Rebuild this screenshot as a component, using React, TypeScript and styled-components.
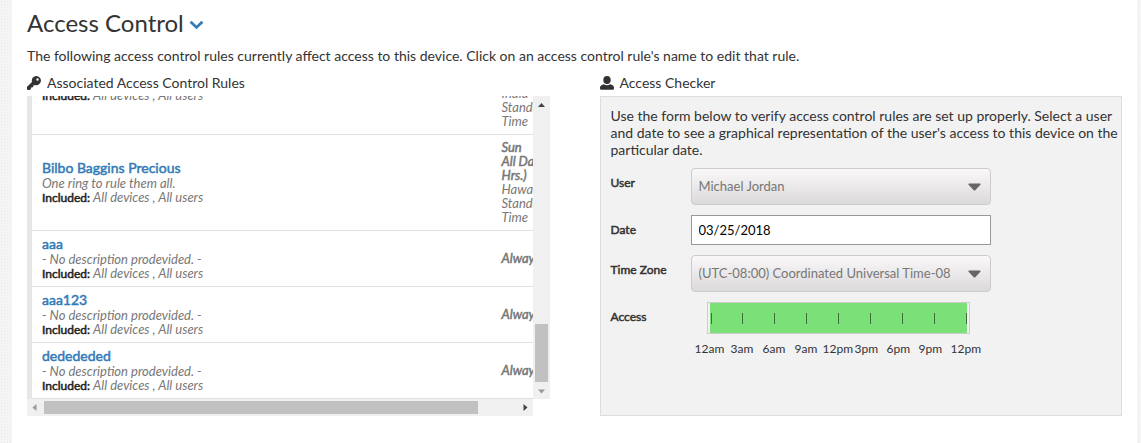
import React from "react";
import styled, { createGlobalStyle, css } from "styled-components";

const GlobalStyle = createGlobalStyle`
  * { box-sizing: border-box; }
  body {
    margin: 0;
    background-color: #f5f5f5;
    background-image: radial-gradient(#e9e9e9 1px, transparent 1px);
    background-size: 3px 3px;
    font-family: Lato, "Liberation Sans", sans-serif;
    font-size: 14px;
    line-height: 17px;
    color: #333;
  }
`;

const Page = styled.main`
  min-height: 100vh;
  margin: 0 4px 0 12px;
  padding: 8px 15px 27px;
  background: #fff;
`;

const Title = styled.h1`
  display: flex;
  align-items: center;
  gap: 5px;
  margin: 0 0 9px;
  font-size: 24px;
  line-height: 30px;
  font-weight: 400;
`;

const Toggle = styled.button`
  display: flex;
  padding: 4px 0 0;
  border: 0;
  background: none;
  color: #337ab7;
`;

const Intro = styled.p`
  margin: 0 0 10px;
`;

const Columns = styled.div`
  display: grid;
  grid-template-columns: 1fr 1fr;
  gap: 50px;
`;

const Column = styled.section`
  min-width: 0;
`;

const SectionTitle = styled.h2`
  display: flex;
  align-items: center;
  gap: 6px;
  margin: 0 0 5px;
  font-size: 14px;
  line-height: 17px;
  font-weight: 400;
`;

const emphasis = css`
  font-weight: 400;
  -webkit-text-stroke: 0.5px currentColor;
`;

const ScrollArea = styled.div`
  display: grid;
  grid-template-columns: minmax(0, 1fr) 17px;
  grid-template-rows: 303px 17px;
`;

const Viewport = styled.div`
  display: flex;
  align-items: flex-end;
  overflow: hidden;
  border-left: 5px solid #e6e6e6;
`;

const RuleTable = styled.table`
  flex: none;
  width: calc(100% + 47px);
  table-layout: fixed;
  border-collapse: separate;
  border-spacing: 0;
  font-size: 12px;
  line-height: 14px;
`;

const Cell = styled.td<{ $top?: boolean }>`
  padding: ${(p) => (p.$top ? "7px" : "5px")} 10px 6px;
  border-bottom: 1px solid #e0e0e0;
  vertical-align: ${(p) => (p.$top ? "top" : "middle")};
`;

const ScheduleCell = styled(Cell)`
  width: 88px;
  padding-top: 5px;
  color: #777;
  font-size: 13px;
  font-style: italic;
`;

const RuleLink = styled.a`
  display: block;
  font-size: 14px;
  line-height: 16px;
  color: #337ab7;
  text-decoration: none;
  ${emphasis}
`;

const Note = styled.div`
  color: #777;
  font-size: 13px;
  font-style: italic;
`;

const Strong = styled.strong`
  ${emphasis}
`;

const Included = styled.div`
  height: 14px;
  ${Strong} { color: #222; }
`;

const Muted = styled.em`
  color: #777;
  font-size: 13px;
`;

const VerticalBar = styled.div`
  display: flex;
  flex-direction: column;
  align-items: center;
  padding: 5px 2px;
  background: #f0f0f0;
`;

const HorizontalBar = styled.div`
  display: flex;
  align-items: center;
  padding: 0 5px;
  background: #f0f0f0;
`;

const Arrow = styled.svg`
  flex: none;
  display: block;
`;

const VerticalThumb = styled.div`
  width: 13px;
  height: 58px;
  margin: auto 0 7px;
  background: #c1c1c1;
`;

const HorizontalTrack = styled.div`
  flex: 1;
  padding: 0 7px;
`;

const HorizontalThumb = styled.div`
  width: 92%;
  height: 13px;
  background: #c1c1c1;
`;

const Checker = styled.div`
  min-height: 320px;
  padding: 10px 0 20px 10px;
  border: 1px solid #ddd;
  background: #f2f2f2;
`;

const Help = styled.p`
  margin: 0 0 10px;
`;

const Form = styled.form`
  display: grid;
  gap: 10px;
`;

const Field = styled.div`
  display: grid;
  grid-template-columns: 80px minmax(0, 300px);
  align-items: start;
`;

const labelStyle = css`
  padding-top: 7px;
  font-size: 12px;
  line-height: 16px;
  ${emphasis}
`;

const Label = styled.label`
  ${labelStyle}
`;

const Caption = styled.span`
  ${labelStyle}
`;

const SelectBox = styled.div`
  position: relative;
`;

const Select = styled.select`
  display: block;
  width: 100%;
  height: 37px;
  padding: 0 36px 0 7px;
  appearance: none;
  border: 1px solid #ccc;
  border-radius: 4px;
  background: linear-gradient(#faf8f8, #dbd9d9);
  color: #777;
  font: inherit;
  font-size: 13px;
`;

const SelectArrow = styled.svg`
  position: absolute;
  right: 10px;
  top: 15px;
  pointer-events: none;
`;

const TextInput = styled.input`
  display: block;
  width: 100%;
  height: 30px;
  padding: 0 7px;
  border: 1px solid #999;
  background: #fff;
  color: #000;
  font: inherit;
  font-size: 13px;
`;

const Timeline = styled.div`
  padding-left: 4px;
`;

const Band = styled.div`
  width: 263px;
  height: 32px;
  margin-left: 12px;
  padding: 0 2px;
  border: 1px solid #ccc;
`;

const BandFill = styled.div`
  display: flex;
  align-items: center;
  justify-content: space-between;
  height: 100%;
  padding: 0 0 0 1px;
  background: #7be077;
`;

const Tick = styled.span`
  width: 1px;
  height: 11px;
  background: #3c703b;
`;

const Hours = styled.div`
  display: grid;
  grid-template-columns: 36px 32px 32px 28px repeat(5, 32px);
  margin-top: 7px;
  font-size: 12px;
  line-height: 16px;
`;

const rules = [
  { name: "Bilbo Baggins Precious", note: "One ring to rule them all.", days: "Sun", hours: "All Day (24 Hrs.)", zone: "Hawaii Standard Time" },
  { name: "aaa", note: "- No description prodevided. -", days: "Always" },
  { name: "aaa123", note: "- No description prodevided. -", days: "Always" },
  { name: "dedededed", note: "- No description prodevided. -", days: "Always" },
];

const hours = ["12am", "3am", "6am", "9am", "12pm", "3pm", "6pm", "9pm", "12pm"];

function KeyIcon() {
  return (
    <svg width="14" height="14" viewBox="0 0 14 14" fill="#333" aria-hidden="true">
      <path
        fillRule="evenodd"
        d="M9.4 0A4.6 4.6 0 0 0 5 5.9L0.3 10.6Q0 10.9 0 11.3V13.2Q0 14 0.8 14H2.7L4 12.8V11.6H5.2L6.4 10.4V9.3H7.5L8 9A4.6 4.6 0 1 0 9.4 0ZM10.5 2.3A1.2 1.2 0 1 1 10.5 4.7A1.2 1.2 0 1 1 10.5 2.3Z"
      />
    </svg>
  );
}

function UserIcon() {
  return (
    <svg width="14" height="14" viewBox="0 0 14 14" fill="#333" aria-hidden="true">
      <ellipse cx="7" cy="4" rx="3.7" ry="4" />
      <path d="M3.6 8.2Q7 10.4 10.4 8.2L12.6 9.2Q14 9.9 14 11.4V12.6Q14 13.8 12.8 13.8H1.2Q0 13.8 0 12.6V11.4Q0 9.9 1.4 9.2Z" />
    </svg>
  );
}

function IncludedLine() {
  return (
    <Included>
      <Strong>Included:</Strong> <Muted>All devices , All users</Muted>
    </Included>
  );
}

function DropDown({ id, value }: { id: string; value: string }) {
  return (
    <SelectBox>
      <Select id={id} defaultValue={value}>
        <option value={value}>{value}</option>
      </Select>
      <SelectArrow width="13" height="8" viewBox="0 0 13 8" aria-hidden="true">
        <path d="M1 0.5h11q1 0.3 0.4 1.2L7.5 7q-1 1-2 0L0.6 1.7Q0 0.8 1 0.5z" fill="#666" />
      </SelectArrow>
    </SelectBox>
  );
}

export default function App() {
  return (
    <>
      <GlobalStyle />
      <Page>
        <Title>
          Access Control
          <Toggle type="button" aria-label="Toggle section">
            <svg width="15" height="10" viewBox="0 0 15 10" aria-hidden="true">
              <path d="M1.6 1.8L7.5 7.4L13.4 1.8" fill="none" stroke="currentColor" strokeWidth="2.8" />
            </svg>
          </Toggle>
        </Title>
        <Intro>
          The following access control rules currently affect access to this device. Click on an access control rule's name to edit that rule.
        </Intro>
        <Columns>
          <Column>
            <SectionTitle>
              <KeyIcon />
              Associated Access Control Rules
            </SectionTitle>
            <ScrollArea>
              <Viewport>
                <RuleTable>
                  <tbody>
                    <tr>
                      <Cell $top>
                        <IncludedLine />
                      </Cell>
                      <ScheduleCell>India Standard Time</ScheduleCell>
                    </tr>
                    {rules.map((rule) => (
                      <tr key={rule.name}>
                        <Cell>
                          <RuleLink href="#">{rule.name}</RuleLink>
                          <Note>{rule.note}</Note>
                          <IncludedLine />
                        </Cell>
                        <ScheduleCell>
                          <Strong as="div">{rule.days}</Strong>
                          {rule.hours && <Strong as="div">{rule.hours}</Strong>}
                          {rule.zone}
                        </ScheduleCell>
                      </tr>
                    ))}
                  </tbody>
                </RuleTable>
              </Viewport>
              <VerticalBar>
                <Arrow width="7" height="8" viewBox="0 0 7 8">
                  <path d="M0 6L3.5 2L7 6z" fill="#444" />
                </Arrow>
                <VerticalThumb />
                <Arrow width="7" height="5" viewBox="0 0 7 5">
                  <path d="M0 0.5h7L3.5 4.5z" fill="#999" />
                </Arrow>
              </VerticalBar>
              <HorizontalBar>
                <Arrow width="5" height="7" viewBox="0 0 5 7">
                  <path d="M4.5 0v7L0.5 3.5z" fill="#999" />
                </Arrow>
                <HorizontalTrack>
                  <HorizontalThumb />
                </HorizontalTrack>
                <Arrow width="5" height="7" viewBox="0 0 5 7">
                  <path d="M0.5 0v7L4.5 3.5z" fill="#444" />
                </Arrow>
              </HorizontalBar>
            </ScrollArea>
          </Column>
          <Column>
            <SectionTitle>
              <UserIcon />
              Access Checker
            </SectionTitle>
            <Checker>
              <Help>
                Use the form below to verify access control rules are set up properly. Select a user and date to see a graphical representation of the user's access to this device on the particular date.
              </Help>
              <Form>
                <Field>
                  <Label htmlFor="user">User</Label>
                  <DropDown id="user" value="Michael Jordan" />
                </Field>
                <Field>
                  <Label htmlFor="date">Date</Label>
                  <TextInput id="date" type="text" defaultValue="03/25/2018" />
                </Field>
                <Field>
                  <Label htmlFor="zone">Time Zone</Label>
                  <DropDown id="zone" value="(UTC-08:00) Coordinated Universal Time-08" />
                </Field>
                <Field>
                  <Caption>Access</Caption>
                  <Timeline>
                    <Band>
                      <BandFill>
                        {hours.map((_, i) => (
                          <Tick key={i} />
                        ))}
                      </BandFill>
                    </Band>
                    <Hours>
                      {hours.map((hour, i) => (
                        <span key={i}>{hour}</span>
                      ))}
                    </Hours>
                  </Timeline>
                </Field>
              </Form>
            </Checker>
          </Column>
        </Columns>
      </Page>
    </>
  );
}
